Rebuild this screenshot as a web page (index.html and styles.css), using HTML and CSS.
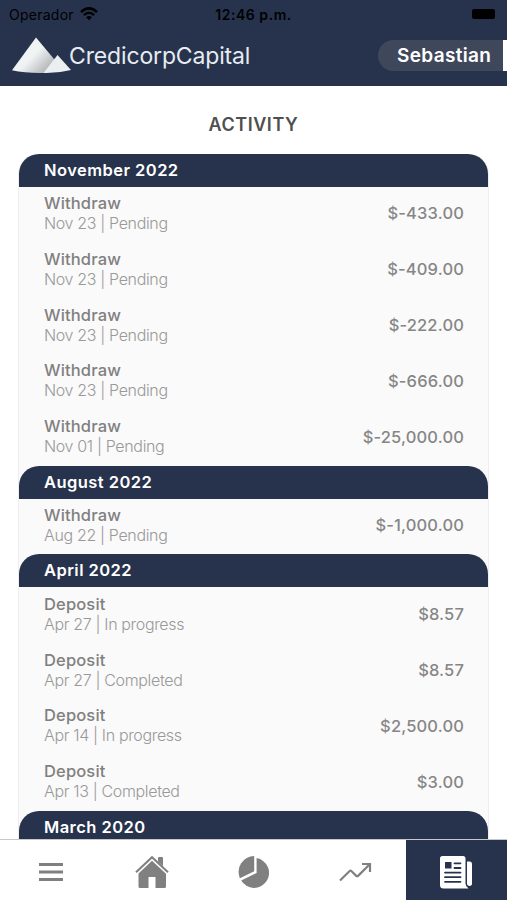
FILE: index.html
```html
<!DOCTYPE html>
<html lang="en">
  <head>
    <meta charset="utf-8">
    <title>Activity</title>
    <link rel="stylesheet" href="styles.css">
  </head>
  <body>
    <div class="screen">
      <header class="header">
        <div class="status">
          <div class="carrier">
            <span>Operador</span>
            <svg width="18" height="14" viewBox="0 0 18 14">
              <path d="M1 5.2 Q9 -2.4 17 5.2" fill="none" stroke="#000" stroke-width="2.5"/>
              <path d="M3.9 8.1 Q9 3.4 14.1 8.1" fill="none" stroke="#000" stroke-width="2.3"/>
              <path d="M6.1 10.2 Q9 7.8 11.9 10.2 L9 13.2 Z"/>
            </svg>
          </div>
          <div class="time">12:46 p.m.</div>
          <div class="battery"></div>
        </div>
        <div class="brand-row">
          <div class="brand">
            <svg width="59" height="37" viewBox="0 0 59 37">
              <defs>
                <linearGradient id="peak" gradientUnits="userSpaceOnUse" x1="14" y1="14" x2="34" y2="34">
                  <stop offset="0.3" stop-color="#f0f3f4"/>
                  <stop offset="1" stop-color="#b4b6b9"/>
                </linearGradient>
              </defs>
              <path d="M24 0.5 L44.5 25 L32 36 Q14 36.4 0 33.3 Z" fill="url(#peak)"/>
              <path d="M45.5 18 L59 33 Q46 36.4 31.5 36 Z" fill="#eceff1"/>
            </svg>
            <span class="brand-name">CredicorpCapital</span>
          </div>
          <div class="user"><span>Sebastian</span></div>
        </div>
      </header>

      <main class="content">
        <h1 class="title">ACTIVITY</h1>
        <div class="list">
          <section class="month">
            <h2 class="month-name">November 2022</h2>
            <div class="row">
              <div><div class="kind">Withdraw</div><div class="detail">Nov 23 | Pending</div></div>
              <div class="amount">$-433.00</div>
            </div>
            <div class="row">
              <div><div class="kind">Withdraw</div><div class="detail">Nov 23 | Pending</div></div>
              <div class="amount">$-409.00</div>
            </div>
            <div class="row">
              <div><div class="kind">Withdraw</div><div class="detail">Nov 23 | Pending</div></div>
              <div class="amount">$-222.00</div>
            </div>
            <div class="row">
              <div><div class="kind">Withdraw</div><div class="detail">Nov 23 | Pending</div></div>
              <div class="amount">$-666.00</div>
            </div>
            <div class="row">
              <div><div class="kind">Withdraw</div><div class="detail">Nov 01 | Pending</div></div>
              <div class="amount">$-25,000.00</div>
            </div>
          </section>
          <section class="month">
            <h2 class="month-name">August 2022</h2>
            <div class="row">
              <div><div class="kind">Withdraw</div><div class="detail">Aug 22 | Pending</div></div>
              <div class="amount">$-1,000.00</div>
            </div>
          </section>
          <section class="month">
            <h2 class="month-name">April 2022</h2>
            <div class="row">
              <div><div class="kind">Deposit</div><div class="detail">Apr 27 | In progress</div></div>
              <div class="amount">$8.57</div>
            </div>
            <div class="row">
              <div><div class="kind">Deposit</div><div class="detail">Apr 27 | Completed</div></div>
              <div class="amount">$8.57</div>
            </div>
            <div class="row">
              <div><div class="kind">Deposit</div><div class="detail">Apr 14 | In progress</div></div>
              <div class="amount">$2,500.00</div>
            </div>
            <div class="row">
              <div><div class="kind">Deposit</div><div class="detail">Apr 13 | Completed</div></div>
              <div class="amount">$3.00</div>
            </div>
          </section>
          <section class="month">
            <h2 class="month-name">March 2020</h2>
          </section>
        </div>
      </main>

      <nav class="tabs">
        <a class="tab">
          <svg width="34" height="34" viewBox="0 0 34 34">
            <path d="M5 9.5H29M5 17H29M5 24.4H29" stroke="#808080" stroke-width="3"/>
          </svg>
        </a>
        <a class="tab">
          <svg width="34" height="34" viewBox="0 0 34 34" fill="#808080">
            <path d="M1 17.2 L17 2.2 L33 17.2" fill="none" stroke="#808080" stroke-width="2"/>
            <path d="M23 3 Q23 2 24 2 H27 Q28 2 28 3 V11.2 L23 6.4 Z"/>
            <path d="M17 5.8 L31 18.8 V31.5 Q31 33 29.5 33 H20.5 V22 H13.5 V33 H5 Q3.5 33 3.5 31.5 V18.4 Z"/>
          </svg>
        </a>
        <a class="tab">
          <svg width="34" height="34" viewBox="0 0 34 34" fill="#808080">
            <path d="M17.2 1 V16.3 L2.9 23.3 A16 16 0 0 1 17.2 1 Z"/>
            <path d="M19.6 3.1 A15 15 0 1 1 4.2 25.6 L19.6 18 Z"/>
          </svg>
        </a>
        <a class="tab">
          <svg width="34" height="34" viewBox="0 0 34 34" fill="none" stroke="#808080" stroke-width="2.2">
            <path d="M2 25.5 L11.4 16.2 Q12.5 15.2 13.6 16.2 L18 20.6 Q19.2 21.7 20.3 20.6 L31.5 9.5"/>
            <path d="M24 9 H32 V17"/>
          </svg>
        </a>
        <a class="tab tab-active">
          <svg width="34" height="34" viewBox="0 0 34 34" fill="#fff">
            <path d="M3.5 1 H24 Q26.5 1 26.5 3.5 V28.5 Q26.5 31.5 29.5 33.5 H4.5 Q1 33.5 1 30 V3.5 Q1 1 3.5 1 Z"/>
            <path d="M28 6.5 H30.5 Q33 6.5 33 9 V28.3 Q33 31 30.5 31 Q28 31 28 28.3 Z"/>
            <path d="M6 7H12.5V13.5H6Z" fill="#27334d"/>
            <path d="M15.5 8.3H21.5M15.5 13H21.5M6 17.6H21.5M6 22.2H21.5M6 26.8H21.5" stroke="#27334d" stroke-width="1.8" stroke-linecap="round"/>
          </svg>
        </a>
      </nav>
    </div>
  </body>
</html>
```

FILE: styles.css
```css
* {
  margin: 0;
  padding: 0;
  box-sizing: border-box;
}

body {
  font-family: Inter, "Liberation Sans", sans-serif;
  background: #fff;
}

.screen {
  display: flex;
  flex-direction: column;
  height: 900px;
  overflow: hidden;
}

.header {
  flex: none;
  height: 86px;
  background: #27334d;
}

.status {
  display: grid;
  grid-template-columns: 1fr auto 1fr;
  align-items: center;
  height: 28px;
  padding: 0 9px;
  color: #000;
}

.carrier {
  display: flex;
  align-items: center;
  gap: 6px;
  font-size: 14px;
  letter-spacing: 0.25px;
}

.time {
  font-size: 14px;
  font-weight: 600;
  letter-spacing: 0.55px;
}

.battery {
  justify-self: end;
  width: 23px;
  height: 10px;
  margin-right: 3px;
  border-radius: 2px;
  background: #000;
}

.brand-row {
  display: flex;
  align-items: center;
  justify-content: space-between;
  height: 55px;
  padding-left: 12px;
}

.brand {
  display: flex;
  align-items: center;
}

.brand-name {
  margin-left: -2px;
  color: #e6ecf2;
  font-size: 23px;
  letter-spacing: -0.15px;
}

.user {
  width: 129px;
  height: 31px;
  padding-left: 19px;
  border-right: 4px solid #fff;
  border-radius: 16px 0 0 16px;
  background: #3f485b;
  color: #fff;
  font-size: 19px;
  font-weight: 600;
  line-height: 31px;
  letter-spacing: 0.35px;
}

.content {
  flex: 1;
  min-height: 0;
  padding: 0 18px;
  overflow: hidden;
}

.title {
  height: 67.6px;
  padding-top: 26px;
  color: #4f4f4f;
  font-size: 18px;
  font-weight: 600;
  line-height: 25px;
  letter-spacing: 0.55px;
  text-align: center;
}

.list {
  border: 1px solid #eee;
  border-top: 0;
  border-radius: 20px 20px 0 0;
  background: #fafafa;
}

.month-name {
  height: 33px;
  padding-left: 25px;
  border-radius: 20px 20px 0 0;
  background: #27334d;
  color: #fff;
  font-size: 16.5px;
  font-weight: 600;
  line-height: 33px;
  letter-spacing: 0.45px;
}

.row {
  display: flex;
  align-items: center;
  justify-content: space-between;
  height: 55.8px;
  padding: 0 24px 2px 25px;
}

.kind {
  color: #808080;
  font-size: 16.5px;
  font-weight: 500;
  line-height: 20px;
  letter-spacing: 0.15px;
}

.detail {
  color: #999;
  font-size: 16px;
  font-weight: 300;
  line-height: 21px;
  letter-spacing: -0.35px;
}

.amount {
  color: #868686;
  font-size: 16.5px;
  font-weight: 500;
  letter-spacing: 0.15px;
}

.tabs {
  display: flex;
  flex: none;
  height: 61px;
  border-top: 1px solid #c8c8c8;
  background: #fff;
}

.tab {
  display: flex;
  flex: 1;
  align-items: center;
  justify-content: center;
  padding-top: 4px;
}

.tab-active {
  background: #27334d;
}
```
